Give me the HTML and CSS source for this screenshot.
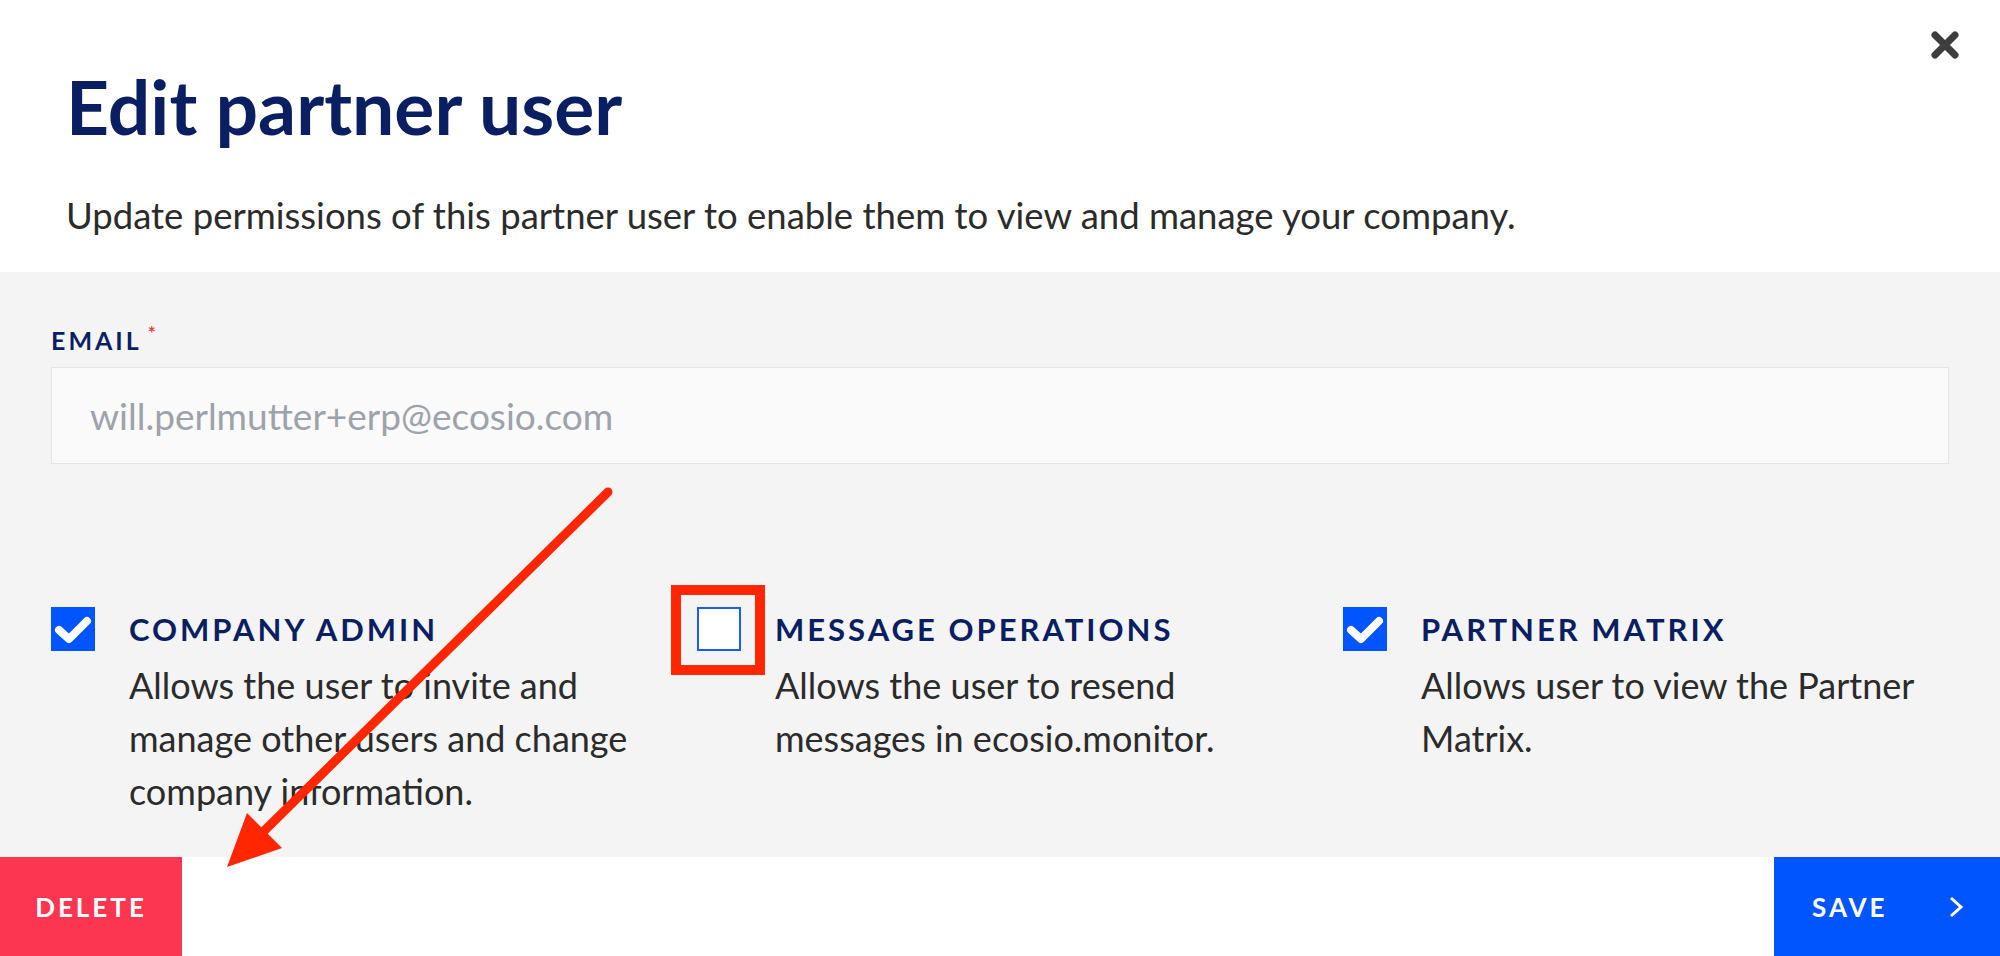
FILE: index.html
```html
<!DOCTYPE html>
<html lang="en">
<head>
<meta charset="utf-8">
<title>Edit partner user</title>
<link rel="stylesheet" href="styles.css">
</head>
<body>
<div class="modal">
  <header class="header">
    <button class="close" aria-label="Close">
      <svg width="30" height="30" viewBox="0 0 30 30"><path d="M5 5 L25 25 M25 5 L5 25" stroke="#3d3d3d" stroke-width="7" stroke-linecap="round"/></svg>
    </button>
    <h1 class="title">Edit partner user</h1>
    <p class="subtitle">Update permissions of this partner user to enable them to view and manage your company.</p>
  </header>
  <section class="body">
    <label class="field-label">EMAIL<span class="req">*</span></label>
    <div class="input">will.perlmutter+erp@ecosio.com</div>
    <div class="perms">
      <div class="perm">
        <span class="box checked"><svg width="44" height="44" viewBox="0 0 44 44"><path d="M8 23 L18 32 L36 14" fill="none" stroke="#fff" stroke-width="8" stroke-linecap="round" stroke-linejoin="round"/></svg></span>
        <div class="perm-text">
          <div class="perm-title">COMPANY ADMIN</div>
          <p class="perm-desc">Allows the user to invite and manage other users and change company information.</p>
        </div>
      </div>
      <div class="perm">
        <span class="box"></span>
        <div class="perm-text">
          <div class="perm-title">MESSAGE OPERATIONS</div>
          <p class="perm-desc">Allows the user to resend messages in ecosio.monitor.</p>
        </div>
      </div>
      <div class="perm">
        <span class="box checked"><svg width="44" height="44" viewBox="0 0 44 44"><path d="M8 23 L18 32 L36 14" fill="none" stroke="#fff" stroke-width="8" stroke-linecap="round" stroke-linejoin="round"/></svg></span>
        <div class="perm-text">
          <div class="perm-title">PARTNER MATRIX</div>
          <p class="perm-desc">Allows user to view the Partner Matrix.</p>
        </div>
      </div>
    </div>
  </section>
  <footer class="footer">
    <button class="btn btn-delete">DELETE</button>
    <button class="btn btn-save">SAVE<svg width="16" height="22" viewBox="0 0 16 22"><path d="M3 2 L13 11 L3 20" fill="none" stroke="#fff" stroke-width="3"/></svg></button>
  </footer>
  <svg class="annot" width="2000" height="956" viewBox="0 0 2000 956">
    <rect x="676" y="590" width="84" height="80" fill="none" stroke="#ff2600" stroke-width="10"/>
    <line x1="608" y1="492" x2="262" y2="833" stroke="#ff2600" stroke-width="9" stroke-linecap="round"/>
    <polygon points="227,867 247,813 282,848" fill="#ff2600"/>
  </svg>
</div>
</body>
</html>
```
FILE: styles.css
```css
html, body {
  margin: 0;
  padding: 0;
  background: #fff;
}
body {
  font-family: Lato, "Open Sans", sans-serif;
}
.modal {
  position: relative;
  width: 2000px;
  height: 956px;
  display: flex;
  flex-direction: column;
  overflow: hidden;
}
.header {
  height: 272px;
  box-sizing: border-box;
  padding: 62px 66px 0;
  background: #fff;
}
.close {
  position: absolute;
  top: 30px;
  left: 1930px;
  width: 30px;
  height: 30px;
  padding: 0;
  border: 0;
  background: none;
}
.close svg { display: block; }
.title {
  margin: 0;
  font-size: 75px;
  line-height: 88px;
  font-weight: 700;
  color: #0a1e62;
}
.subtitle {
  margin: 44px 0 0;
  font-size: 36.5px;
  line-height: 42px;
  color: #2b2b2b;
}
.body {
  height: 585px;
  box-sizing: border-box;
  background: #f4f4f4;
  padding: 46px 51px 0;
}
.field-label {
  display: block;
  font-size: 25px;
  line-height: 30px;
  font-weight: 700;
  letter-spacing: 3px;
  color: #0a1e62;
}
.req {
  color: #ee3b43;
  font-size: 19px;
  vertical-align: 10px;
  margin-left: 6px;
}
.input {
  margin-top: 12px;
  height: 97px;
  box-sizing: border-box;
  border: 1px solid #e4e4e4;
  background: #fafafa;
  padding-left: 38px;
  display: flex;
  align-items: center;
  font-size: 37px;
  color: #9ea2aa;
}
.perms {
  margin-top: 143px;
  display: grid;
  grid-template-columns: repeat(3, 606px);
  column-gap: 40px;
}
.perm {
  display: flex;
  gap: 34px;
}
.box {
  flex: none;
  width: 44px;
  height: 44px;
  box-sizing: border-box;
  background: #fff;
  border: 2px solid #1b5cff;
}
.box.checked {
  background: #0055ff;
  border: 0;
}
.box svg { display: block; }
.perm-title {
  font-size: 31px;
  line-height: 44px;
  font-weight: 700;
  letter-spacing: 3px;
  color: #0a1e62;
}
.perm-desc {
  margin: 8px 0 0;
  font-size: 36px;
  line-height: 53px;
  color: #2b2b2b;
}
.footer {
  flex: 1;
  display: flex;
  justify-content: space-between;
  background: #fff;
}
.btn {
  border: 0;
  margin: 0;
  font-family: Lato, sans-serif;
  font-weight: 700;
  font-size: 26px;
  letter-spacing: 3px;
  color: #fff;
  height: 99px;
}
.btn-delete {
  width: 182px;
  background: #fc3551;
}
.btn-save {
  width: 226px;
  background: #0055ff;
  display: flex;
  align-items: center;
  justify-content: space-between;
  padding: 0 36px 0 38px;
}
.btn-save svg { display: block; }
.annot {
  position: absolute;
  left: 0;
  top: 0;
  pointer-events: none;
}
```
